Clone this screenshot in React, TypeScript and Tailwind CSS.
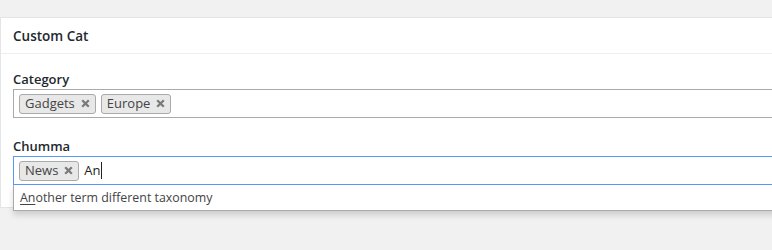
import React from "react";

function XIcon() {
  return (
    <svg width="9" height="9" viewBox="0 0 9 9" className="ml-[6px]">
      <path d="M1.2 1.2 L7.8 7.8 M7.8 1.2 L1.2 7.8" stroke="#7a7a7a" strokeWidth="2.3" strokeLinecap="butt" />
    </svg>
  );
}

function Tag({ label }: { label: string }) {
  return (
    <span className="flex items-center h-[20px] mr-[5px] px-[5px] rounded-[3px] border border-[#aaa] bg-[#e8e8e8] text-[13px] text-[#444] leading-none">
      {label}
      <XIcon />
    </span>
  );
}

export default function App() {
  return (
    <div className="h-[250px] w-full overflow-hidden bg-[#f1f1f1] pt-[17px] font-['Open_Sans',sans-serif] text-[#23282d]">
      <div className="relative w-[820px] h-[191px] bg-white border-l border-t border-b border-[#e5e5e5]">
        <div className="h-[36px] border-b border-[#eee] px-3 pt-[2px] flex items-center">
          <h2 className="text-[13.5px] font-semibold leading-none">Custom Cat</h2>
        </div>
        <div className="pl-3 pt-[16px]">
          <div className="h-[19px] text-[13px] font-semibold leading-[19px]">Category</div>
          <div className="h-[29px] border border-[#aaa] flex items-center pl-[5px]">
            <Tag label="Gadgets" />
            <Tag label="Europe" />
          </div>
          <div className="mt-[19px] h-[19px] text-[13px] font-semibold leading-[19px]">Chumma</div>
          <div className="relative">
            <div className="h-[29px] border border-[#5897fb] flex items-center pl-[5px]">
              <Tag label="News" />
              <span className="text-[13px] text-[#222] flex items-center">
                An<span className="inline-block w-px h-[17px] bg-[#222]" />
              </span>
            </div>
            <div className="absolute left-0 right-0 top-[29px] h-[26px] bg-white border-l border-r border-b border-[#aaa] shadow-[0_4px_6px_rgba(0,0,0,0.15)] flex items-center pl-[6px] pt-[2px] text-[12.4px] text-[#444]">
              <span className="underline underline-offset-2">An</span>other term different taxonomy
            </div>
          </div>
        </div>
      </div>
    </div>
  );
}
